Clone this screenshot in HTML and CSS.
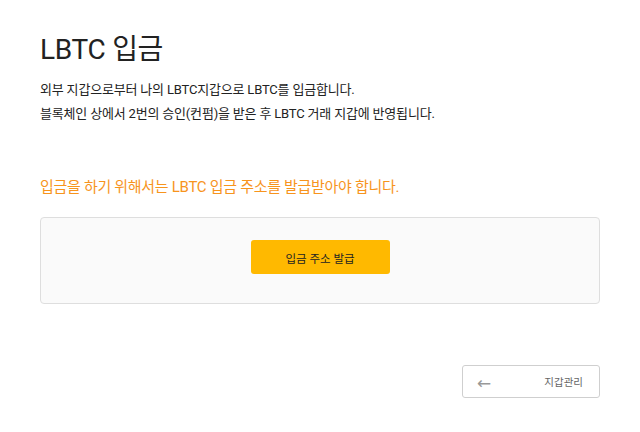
FILE: index.html
```html
<!DOCTYPE html>
<html lang="ko">
<head>
<meta charset="utf-8">
<link rel="stylesheet" href="styles.css">
</head>
<body>
<main class="page">
  <h1 class="title">LBTC 입금</h1>
  <p class="desc">외부 지갑으로부터 나의 LBTC지갑으로 LBTC를 입금합니다.<br>블록체인 상에서 2번의 승인(컨펌)을 받은 후 LBTC 거래 지갑에 반영됩니다.</p>
  <p class="notice">입금을 하기 위해서는 LBTC 입금 주소를 발급받아야 합니다.</p>
  <section class="panel">
    <button class="issue">입금 주소 발급</button>
  </section>
  <div class="footer">
    <button class="wallet"><span class="arrow">←</span><span>지갑관리</span></button>
  </div>
</main>
</body>
</html>
```
FILE: styles.css
```css
* { box-sizing: border-box; }
html, body { margin: 0; padding: 0; background: #fff; }
body { font-family: Roboto, "Noto Sans CJK KR", sans-serif; color: #222; }
.page { padding: 28px 40px 0 40px; width: 640px; }
.title { margin: 0; font-size: 28px; font-weight: 400; line-height: 44px; color: #222; letter-spacing: -0.3px; }
.desc { margin: 6px 0 0; font-size: 13px; line-height: 24px; color: #222; letter-spacing: -0.18px; }
.notice { margin: 48px 0 0; font-size: 15px; line-height: 26px; color: #f7941d; letter-spacing: -0.3px; }
.panel { margin-top: 17px; height: 87px; border: 1px solid #dedede; border-radius: 4px; background: #fafafa; display: flex; justify-content: center; align-items: flex-start; padding-top: 22px; }
.issue { width: 139px; height: 34px; background: #ffb900; border: 0; border-radius: 3px; font-family: inherit; font-size: 11.5px; color: #222; padding: 2px 0 0; }
.footer { display: flex; justify-content: flex-end; margin-top: 61px; }
.wallet { width: 138px; height: 33px; border: 1px solid #cfcfcf; border-radius: 3px; background: #fff; display: flex; justify-content: space-between; align-items: center; padding: 0 16px 0 14px; font-family: inherit; font-size: 10.5px; color: #666; }
.arrow { font-family: "DejaVu Sans", sans-serif; font-size: 17px; line-height: 1; color: #999; margin-top: 4px; }
```
